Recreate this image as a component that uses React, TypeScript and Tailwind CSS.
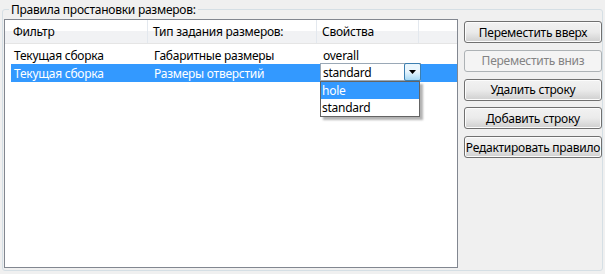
import React from "react";

const rows = [
  { filter: "Текущая сборка", type: "Габаритные размеры", prop: "overall" },
  { filter: "Текущая сборка", type: "Размеры отверстий", prop: "standard" },
];

const buttons = [
  { label: "Переместить вверх", disabled: false },
  { label: "Переместить вниз", disabled: true },
  { label: "Удалить строку", disabled: false },
  { label: "Добавить строку", disabled: false },
  { label: "Редактировать правило", disabled: false },
];

function WinButton({ label, disabled }: { label: string; disabled: boolean }) {
  if (disabled) {
    return (
      <div className="h-[22px] rounded-[3px] border border-[#adb2b5] bg-[#f4f4f4] flex items-center justify-center whitespace-nowrap text-[#838383]">
        {label}
      </div>
    );
  }
  return (
    <div className="h-[22px] rounded-[3px] border border-[#707070] bg-gradient-to-b from-[#f2f2f2] via-[#ebebeb] to-[#cfcfcf] shadow-[inset_0_0_0_1px_#fcfcfc] flex items-center justify-center whitespace-nowrap text-black">
      {label}
    </div>
  );
}

export default function App() {
  return (
    <div className="w-[605px] h-[274px] bg-[#f0f0f0] pt-[2px] text-[12px] leading-[15px] tracking-[-0.25px] text-black font-['Noto_Sans',sans-serif]">
      <fieldset className="mx-[2px] h-[269px] border border-[#d5dfe5] rounded-[3px] pl-[1px] pr-[0px]">
        <legend className="ml-[5px] px-[2px] text-[#000]">Правила простановки размеров:</legend>
        <div className="flex gap-[6px] pt-[2px]">
          {/* List */}
          <div className="relative w-[454px] h-[249px] border border-[#828790] bg-white">
            {/* Header */}
            <div className="flex h-[24px] bg-gradient-to-b from-white from-50% to-[#f1f2f4] to-50% border-b border-[#e5e5e5]">
              <div className="w-[143px] border-r border-[#e3e8ee] pl-[8px] flex items-center">Фильтр</div>
              <div className="w-[169px] border-r border-[#e3e8ee] pl-[5px] flex items-center">Тип задания размеров:</div>
              <div className="w-[102px] border-r border-[#e3e8ee] pl-[5px] flex items-center">Свойства</div>
              <div className="flex-1" />
            </div>
            {/* Rows */}
            <div className="pt-[2px]">
              {rows.map((r, i) => (
                <div
                  key={i}
                  className={`flex h-[18px] items-center ml-[6px] ${i === 1 ? "bg-[#3399ff] text-white" : ""}`}
                >
                  <div className="w-[137px] pl-[3px]">{r.filter}</div>
                  <div className="w-[169px] pl-[6px]">{r.type}</div>
                  <div className="w-[102px] pl-[6px]">{i === 1 ? "" : r.prop}</div>
                </div>
              ))}
            </div>

            {/* Combo + dropdown over the selected row */}
            <div className="absolute left-[315px] top-[43px] w-[101px]">
              <div className="h-[18px] flex border border-[#9aa8b6] bg-white text-black">
                <div className="flex-1 pl-[2px] flex items-center">standard</div>
                <div className="w-[17px] -my-[1px] -mr-[1px] rounded-[2px] border border-[#3c7fb1] bg-gradient-to-b from-[#eaf6fd] from-45% to-[#a7d9f5] flex items-center justify-center">
                  <svg width="7" height="4" viewBox="0 0 7 4">
                    <path d="M0 0h7L3.5 4z" fill="#000" />
                  </svg>
                </div>
              </div>
              <div className="w-[100px] border border-[#646464] bg-white text-black shadow-[3px_3px_2px_rgba(0,0,0,0.3)]">
                <div className="h-[17px] pl-[1px] flex items-center bg-[#3399ff] text-white">hole</div>
                <div className="h-[17px] pl-[1px] flex items-center">standard</div>
              </div>
            </div>
          </div>

          {/* Buttons */}
          <div className="w-[138px] flex flex-col gap-[6.75px] pt-[2px]">
            {buttons.map((b) => (
              <WinButton key={b.label} label={b.label} disabled={b.disabled} />
            ))}
          </div>
        </div>
      </fieldset>
    </div>
  );
}
